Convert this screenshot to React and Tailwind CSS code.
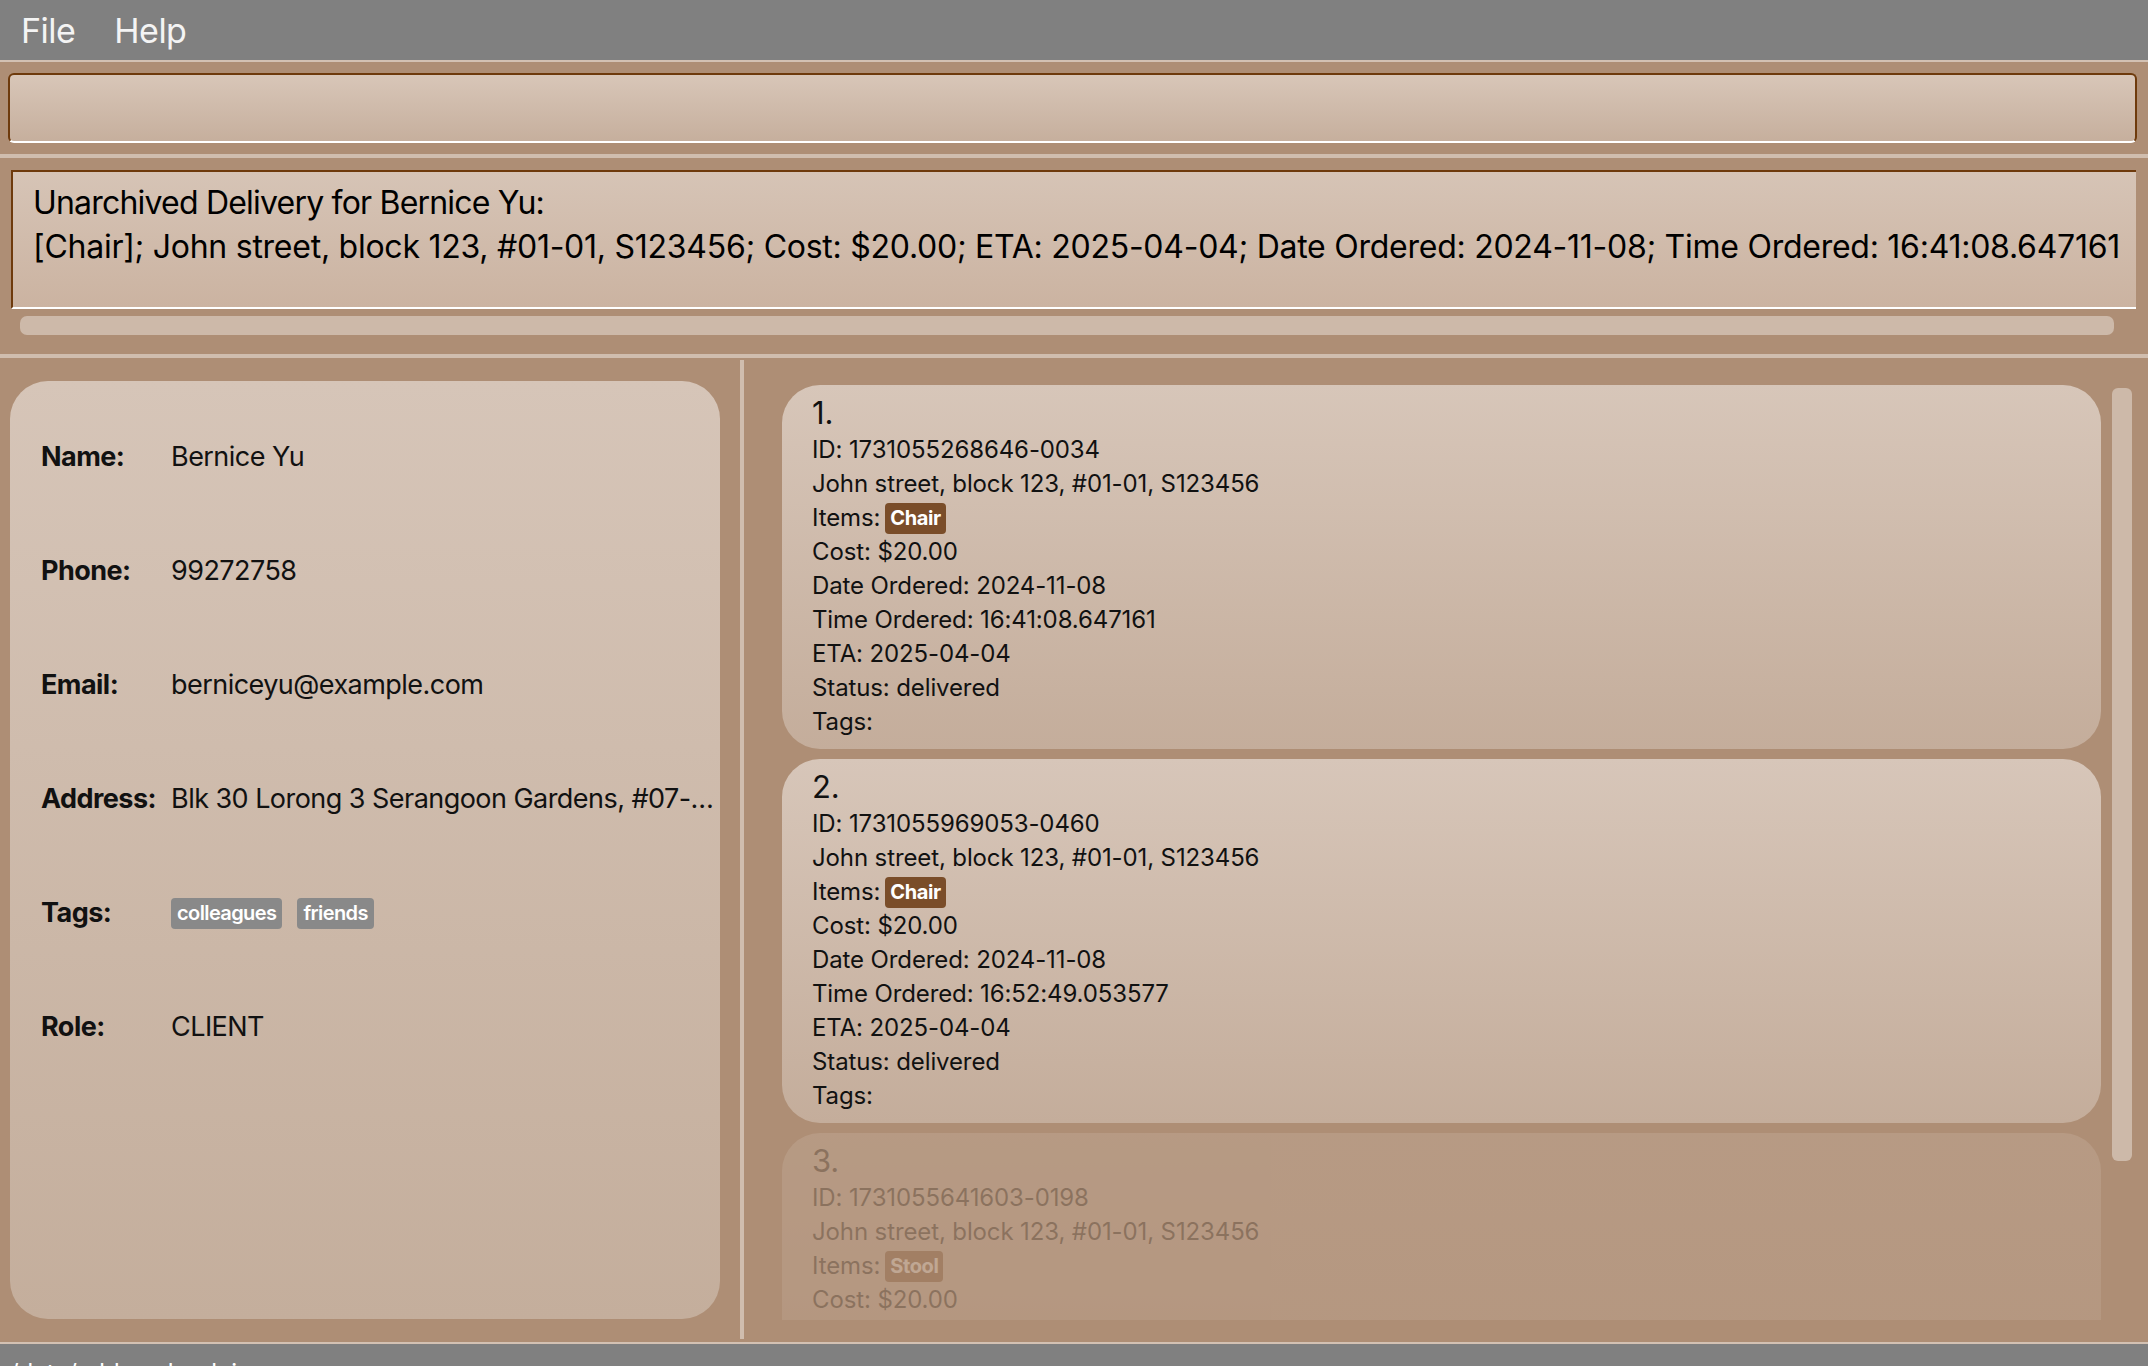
import React from "react";

const deliveries = [
  {
    n: 1,
    id: "1731055268646-0034",
    item: "Chair",
    date: "2024-11-08",
    time: "16:41:08.647161",
    eta: "2025-04-04",
    status: "delivered",
  },
  {
    n: 2,
    id: "1731055969053-0460",
    item: "Chair",
    date: "2024-11-08",
    time: "16:52:49.053577",
    eta: "2025-04-04",
    status: "delivered",
  },
  {
    n: 3,
    id: "1731055641603-0198",
    item: "Stool",
    date: "2024-11-08",
    time: "16:47:21.603198",
    eta: "2025-04-04",
    status: "pending",
    faded: true,
  },
];

function InfoRow({ label, children }) {
  return (
    <div className="flex h-[114px] items-center">
      <div className="w-[130px] shrink-0 font-bold">{label}</div>
      <div className="min-w-0 flex-1 truncate">{children}</div>
    </div>
  );
}

function DeliveryCard({ d }) {
  return (
    <div
      className={`shrink-0 rounded-[38px] bg-gradient-to-b from-[#d7c6b9] to-[#c4ad9b] pb-[10px] pl-[30px] pt-[8px] text-[24px] leading-[34px] tracking-[-0.005em] text-[#111] ${
        d.faded ? "opacity-[0.22]" : ""
      }`}
    >
      <div className="text-[31px] leading-[40px]">{d.n}.</div>
      <div>ID: {d.id}</div>
      <div>John street, block 123, #01-01, S123456</div>
      <div className="flex items-center gap-[5px]">
        <span>Items:</span>
        <span className="rounded-[4px] bg-[#7a4d29] px-[5px] text-[20px] font-bold leading-[31px] tracking-[-0.02em] text-white">
          {d.item}
        </span>
      </div>
      <div>Cost: $20.00</div>
      <div>Date Ordered: {d.date}</div>
      <div>Time Ordered: {d.time}</div>
      <div>ETA: {d.eta}</div>
      <div>Status: {d.status}</div>
      <div>Tags:</div>
    </div>
  );
}

export default function App() {
  return (
    <div className="flex h-[1366px] w-full flex-col overflow-hidden bg-[#ae8e75] font-[Inter,sans-serif] text-black">
      {/* menu bar */}
      <div className="flex h-[60px] shrink-0 items-center gap-[39px] bg-[#808080] pl-[21px] text-[34px] tracking-[-0.015em] text-[#f4f4f4]">
        <span>File</span>
        <span>Help</span>
      </div>
      <div className="h-[2px] shrink-0 bg-[#d3c1b3]" />

      {/* command box */}
      <div className="shrink-0 pl-[8px] pr-[11px] pt-[11px]">
        <div className="h-[70px] rounded-[6px] border-2 border-[#6e3a0c] border-b-white bg-gradient-to-b from-[#d8c6b8] to-[#c6af9d]" />
      </div>
      <div className="mt-[11px] h-[4px] shrink-0 bg-[#d0bdae]" />

      {/* result display */}
      <div className="shrink-0 pl-[11px] pr-[12px] pt-[12px]">
        <div className="h-[139px] whitespace-nowrap border-b-2 border-l-2 border-t-2 border-[#6e3a0c] border-b-white bg-gradient-to-b from-[#d6c4b6] to-[#cbb3a1] pl-[20px] pt-[9px] text-[32px] leading-[44px]">
          <div className="tracking-[-0.025em]">Unarchived Delivery for Bernice Yu:</div>
          <div className="tracking-[-0.008em]">
            [Chair]; John street, block 123, #01-01, S123456; Cost: $20.00; ETA: 2025-04-04; Date Ordered: 2024-11-08; Time
            Ordered: 16:41:08.647161
          </div>
        </div>
      </div>
      <div className="ml-[20px] mr-[34px] mt-[7px] h-[19px] shrink-0 rounded-[7px] bg-[#cdb9a9]" />
      <div className="mt-[19px] h-[4px] shrink-0 bg-[#d0bdae]" />

      {/* main split */}
      <div className="flex min-h-0 flex-1">
        {/* person panel */}
        <div className="w-[740px] shrink-0 pl-[10px] pr-[20px] pt-[23px]">
          <div className="h-[938px] rounded-[38px] bg-gradient-to-b from-[#d6c5b8] to-[#c4ae9c] pl-[31px] pr-[4px] pt-[19px] text-[27px] tracking-[-0.02em] text-[#111]">
            <InfoRow label="Name:">Bernice Yu</InfoRow>
            <InfoRow label="Phone:">99272758</InfoRow>
            <InfoRow label="Email:">berniceyu@example.com</InfoRow>
            <InfoRow label="Address:">Blk 30 Lorong 3 Serangoon Gardens, #07-18</InfoRow>
            <InfoRow label="Tags:">
              <div className="flex gap-[15px]">
                <span className="rounded-[4px] bg-[#898989] px-[6px] text-[20px] font-semibold leading-[31px] tracking-[-0.03em] text-white">
                  colleagues
                </span>
                <span className="rounded-[4px] bg-[#898989] px-[6px] text-[20px] font-semibold leading-[31px] tracking-[-0.03em] text-white">
                  friends
                </span>
              </div>
            </InfoRow>
            <InfoRow label="Role:">CLIENT</InfoRow>
          </div>
        </div>

        {/* divider */}
        <div className="mb-[3px] mt-[2px] w-[4px] shrink-0 bg-[#d0bdae]" />

        {/* delivery list */}
        <div className="flex min-w-0 flex-1 pl-[38px] pt-[27px]">
          <div className="flex h-[935px] w-[1319px] shrink-0 flex-col gap-[10px] overflow-hidden">
            {deliveries.map((d) => (
              <DeliveryCard key={d.n} d={d} />
            ))}
          </div>
          <div className="ml-[11px] mt-[3px] h-[773px] w-[20px] shrink-0 rounded-[6px] bg-[#cdb9a9]" />
        </div>
      </div>

      {/* status bar */}
      <div className="h-[2px] shrink-0 bg-[#d3c1b3]" />
      <div className="h-[22px] shrink-0 overflow-hidden bg-[#808080] pl-[3px] pt-[14px] text-[24px] leading-[30px] text-white">
        ./data/addressbook.json
      </div>
    </div>
  );
}
